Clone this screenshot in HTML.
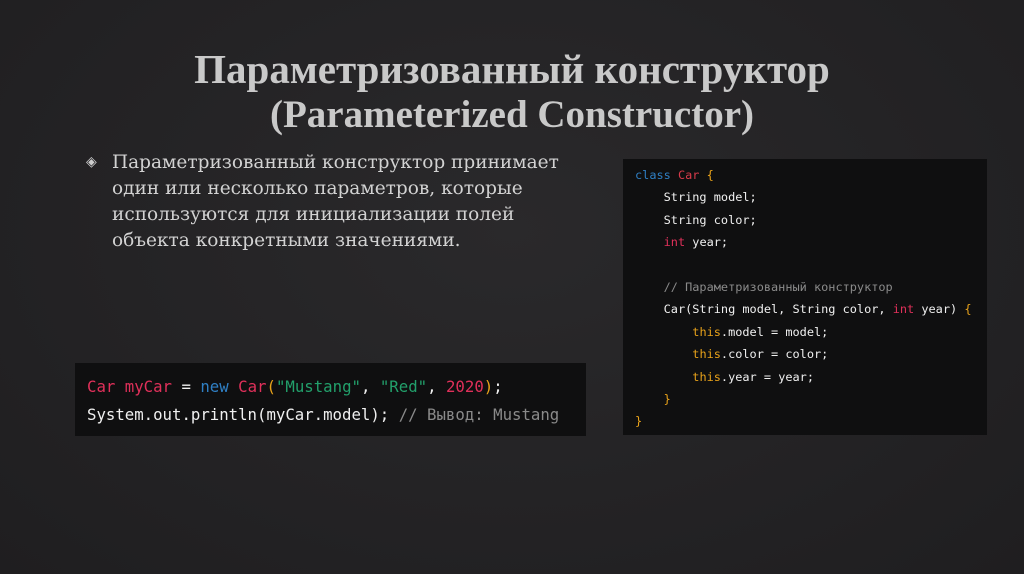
<!DOCTYPE html>
<html><head><meta charset="utf-8"><style>
*{margin:0;padding:0;box-sizing:border-box}
body{width:1024px;height:574px;overflow:hidden;background:#232224;background:radial-gradient(ellipse at 50% 40%,#2a292b 0%,#1f1e20 100%);font-family:"Liberation Serif",serif;color:#cfcfcf;position:relative}
h1{position:absolute;top:47px;left:0;width:1024px;text-align:center;font-size:41px;line-height:44px;font-weight:bold;color:#c9c9c9}
h1 span{font-size:39px}
.txt{position:absolute;left:112px;top:150px;width:480px;font-family:"DejaVu Serif",serif;font-size:18.5px;line-height:26px;color:#d2d2d2;white-space:nowrap}
.bul{position:absolute;left:86px;top:150px;font-size:14px;line-height:26px;color:#cfcfcf}
.code{position:absolute;background:#0f0f10;font-family:"DejaVu Sans Mono","Liberation Mono",monospace;color:#f0f0f0;white-space:pre}
#c1{left:623px;top:159px;width:364px;height:276px;padding:5px 0 0 12px;font-size:11.9px;line-height:22.4px}
#c2{left:75px;top:363px;width:511px;height:73px;padding:10px 0 0 12px;font-size:15.7px;line-height:28px}
.k{color:#2f7fc4}.r{color:#e0305a}.y{color:#e8a21a}.g{color:#8a8a8a}.s{color:#22a06b}.red{color:#d83a4a}
</style></head><body>
<h1>Параметризованный конструктор<br><span>(Parameterized Constructor)</span></h1>
<div class="bul">◈</div>
<div class="txt">Параметризованный конструктор принимает<br>один или несколько параметров, которые<br>используются для инициализации полей<br>объекта конкретными значениями.</div>
<div class="code" id="c1"><span class="k">class</span> <span class="red">Car</span> <span class="y">{</span>
    String model;
    String color;
    <span class="r">int</span> year;

    <span class="g">// Параметризованный конструктор</span>
    Car(String model, String color, <span class="r">int</span> year) <span class="y">{</span>
        <span class="y">this</span>.model = model;
        <span class="y">this</span>.color = color;
        <span class="y">this</span>.year = year;
    <span class="y">}</span>
<span class="y">}</span></div>
<div class="code" id="c2"><span class="r">Car myCar</span> = <span class="k">new</span> <span class="r">Car</span><span class="y">(</span><span class="s">"Mustang"</span>, <span class="s">"Red"</span>, <span class="r">2020</span><span class="y">)</span>;
System.out.println(myCar.model); <span class="g">// Вывод: Mustang</span></div>
</body></html>
